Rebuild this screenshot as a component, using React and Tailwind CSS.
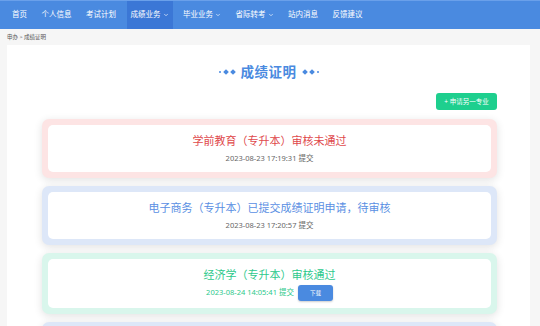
import { ChevronDown } from "lucide-react";

const navItems = [
  { label: "首页" },
  { label: "个人信息" },
  { label: "考试计划" },
  { label: "成绩业务", drop: true, active: true },
  { label: "毕业业务", drop: true },
  { label: "省际转考", drop: true },
  { label: "站内消息" },
  { label: "反馈建议" },
];

const records = [
  {
    title: "学前教育（专升本）审核未通过",
    time: "2023-08-23 17:19:31 提交",
    outer: "bg-[#fde4e4]",
    titleColor: "text-[#e0494c]",
    timeColor: "text-[#666]",
  },
  {
    title: "电子商务（专升本）已提交成绩证明申请，待审核",
    time: "2023-08-23 17:20:57 提交",
    outer: "bg-[#dde7f8]",
    titleColor: "text-[#5a8fe3]",
    timeColor: "text-[#666]",
  },
  {
    title: "经济学（专升本）审核通过",
    time: "2023-08-24 14:05:41 提交",
    outer: "bg-[#d9f6ec]",
    titleColor: "text-[#2dc98c]",
    timeColor: "text-[#2dc98c]",
    download: true,
  },
];

function Diamond({ small }) {
  return small ? (
    <span className="block w-[2px] h-[2px] rounded-full bg-[#4a8ae0]" />
  ) : (
    <span className="block w-[4px] h-[4px] rotate-45 bg-[#4a8ae0]" />
  );
}

export default function App() {
  return (
    <div
      className="w-[540px] h-[326px] overflow-hidden bg-[#f6f6f6]"
      style={{ fontFamily: '"Noto Sans", "Noto Sans CJK SC", sans-serif' }}
    >
      {/* 顶部导航 */}
      <div className="h-[29px] bg-[#4a8ae0] border-t border-[#6aa0ea] flex gap-[6.5px] pl-[8px]">
        {navItems.map((n) => (
          <div
            key={n.label}
            className={
              "h-full flex items-center px-[4px] text-[7.5px] text-white " +
              (n.active ? "bg-[#3b77d6]" : "")
            }
          >
            <span>{n.label}</span>
            {n.drop && <ChevronDown className="ml-[2px] w-[6px] h-[6px]" strokeWidth={2.5} />}
          </div>
        ))}
      </div>

      {/* 面包屑 */}
      <div className="h-[16px] flex items-center pl-[7px] text-[5.5px] text-[#555]">
        申办 &gt; 成绩证明
      </div>

      <div className="ml-[7px] w-[523px] h-[300px] bg-white">
        <div className="h-[48px] flex items-center justify-center gap-[6px] pt-[6px]">
          <div className="flex items-center gap-[3px]">
            <Diamond small />
            <Diamond />
            <Diamond />
          </div>
          <span className="text-[13.5px] font-bold text-[#4a8ae0] tracking-[0.5px]">成绩证明</span>
          <div className="flex items-center gap-[3px]">
            <Diamond />
            <Diamond />
            <Diamond small />
          </div>
        </div>

        <div className="flex justify-end pr-[33px]">
          <button className="h-[17px] w-[61px] rounded-[3px] bg-[#1ecf8e] text-white text-[6.5px] flex items-center justify-center">
            + 申请另一专业
          </button>
        </div>

        <div className="flex flex-col gap-[8px] mt-[9px] pl-[35px]">
          {records.map((r) => (
            <div
              key={r.title}
              className={"w-[455px] p-[6px] rounded-[7px] shadow-[0_2px_8px_rgba(0,0,0,0.12)] " + r.outer}
            >
              <div className="bg-white rounded-[5px] flex flex-col items-center pt-[8px] pb-[7px]">
                <div className={"text-[11px] leading-[16px] " + r.titleColor}>{r.title}</div>
                {r.download ? (
                  <div className="flex items-center gap-[4px] mt-[2px]">
                    <span className={"text-[7.5px] " + r.timeColor}>{r.time}</span>
                    <button className="h-[16px] w-[35px] rounded-[3px] bg-[#4a8ae0] text-white text-[5.5px] shadow-[0_1px_2px_rgba(0,0,0,0.2)]">
                      下载
                    </button>
                  </div>
                ) : (
                  <div className={"text-[7.5px] leading-[14px] mt-[2px] " + r.timeColor}>{r.time}</div>
                )}
              </div>
            </div>
          ))}
          <div className="w-[455px] h-[40px] p-[6px] rounded-[7px] bg-[#dde7f8] shadow-[0_2px_8px_rgba(0,0,0,0.12)]" />
        </div>
      </div>
    </div>
  );
}
